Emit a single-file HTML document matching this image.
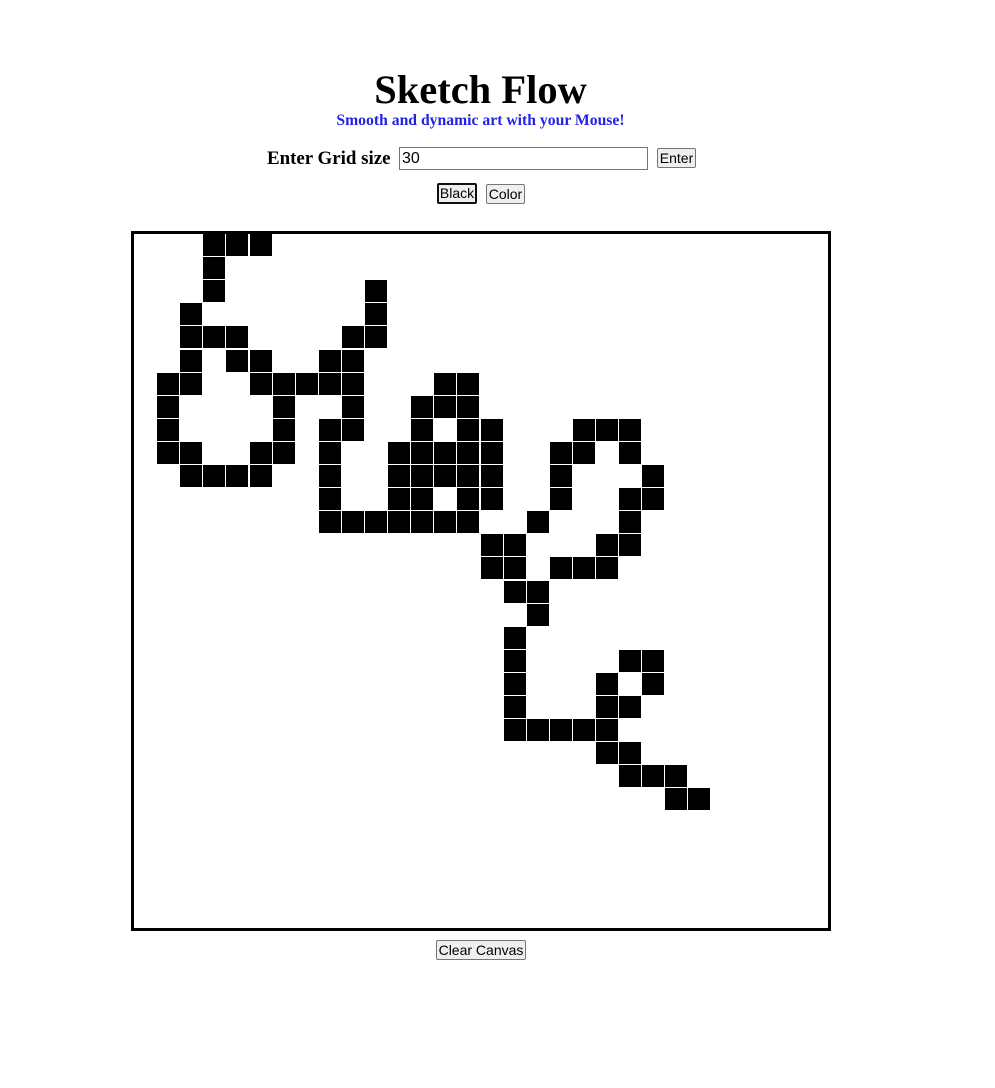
<!DOCTYPE html>
<html><head><meta charset="utf-8"><style>
html,body{margin:0;padding:0;background:#fff;width:995px;height:1088px;overflow:hidden;position:relative;}
.t{position:absolute;left:0;width:961px;text-align:center;font-family:"Liberation Serif",serif;font-weight:bold;}
#title{top:66px;font-size:40.5px;color:#000;line-height:48px;}
#sub{top:111px;font-size:15.7px;color:#2323e6;line-height:20px;}
#lab{position:absolute;left:267px;top:148px;font-family:"Liberation Serif",serif;font-weight:bold;font-size:18.9px;line-height:21px;}
#inp{position:absolute;left:399px;top:147px;border:1px solid #767676;box-sizing:border-box;width:249px;height:23px;font:16px "Liberation Sans",sans-serif;padding:1px 2px;line-height:19px;}
.btn{position:absolute;box-sizing:border-box;border:1px solid #767676;background:#efefef;font:14px "Liberation Sans",sans-serif;text-align:center;line-height:18px;height:20px;color:#000;border-radius:2px;}
#canvas{position:absolute;left:131px;top:231px;width:700px;height:700px;box-sizing:border-box;border:3px solid #000;}
.c{position:absolute;background:#000;width:22px;height:22px;}
</style></head><body>
<div class="t" id="title">Sketch Flow</div>
<div class="t" id="sub">Smooth and dynamic art with your Mouse!</div>
<div id="lab">Enter Grid size</div>
<div id="inp">30</div>
<div class="btn" style="left:657px;top:148px;width:39px;">Enter</div>
<div class="btn" style="left:437px;top:183px;width:40px;height:21px;border:2px solid #101010;line-height:17px;">Black</div>
<div class="btn" style="left:486px;top:184px;width:39px;">Color</div>
<div id="canvas"></div>
<div class="btn" style="left:436px;top:940px;width:90px;">Clear Canvas</div>
<script>
var rows={0:[3,4,5],1:[3],2:[3,10],3:[2,10],4:[2,3,4,9,10],5:[2,4,5,8,9],
6:[1,2,5,6,7,8,9,13,14],7:[1,6,9,12,13,14],8:[1,6,8,9,12,14,15,19,20,21],
9:[1,2,5,6,8,11,12,13,14,15,18,19,21],10:[2,3,4,5,8,11,12,13,14,15,18,22],
11:[8,11,12,14,15,18,21,22],12:[8,9,10,11,12,13,14,17,21],13:[15,16,20,21],
14:[15,16,18,19,20],15:[16,17],16:[17],17:[16],18:[16,21,22],19:[16,20,22],
20:[16,20,21],21:[16,17,18,19,20],22:[20,21],23:[21,22,23],24:[23,24]};
var cv=document.getElementById('canvas'),h='';
for(var r in rows){rows[r].forEach(function(c){h+='<div class="c" style="left:'+(c*23.1).toFixed(1)+'px;top:'+(r*23.1).toFixed(1)+'px"></div>';});}
cv.innerHTML=h;
</script>
</body></html>
